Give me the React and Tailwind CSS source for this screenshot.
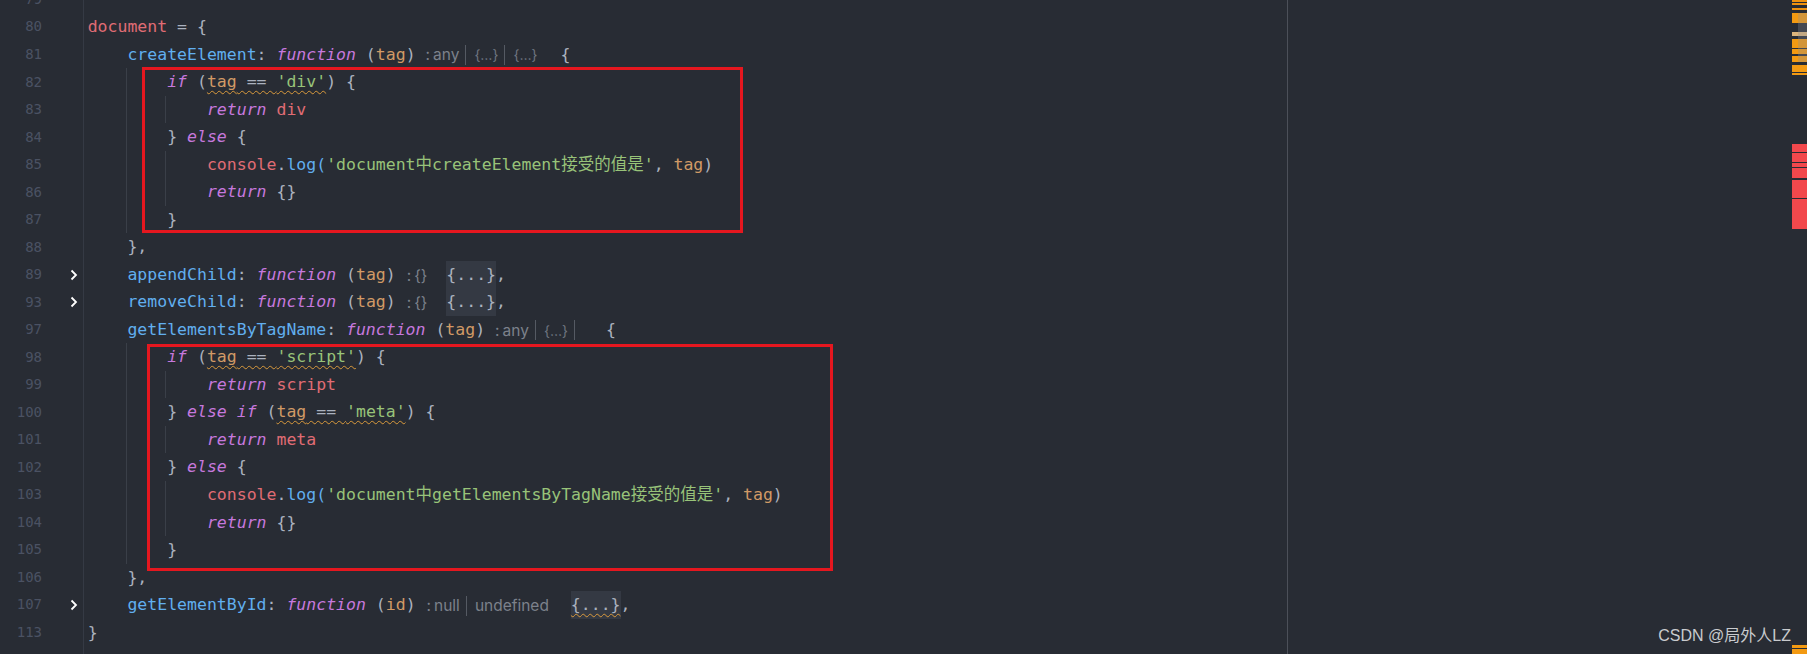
import React from 'react';

const mono = "font-['DejaVu_Sans_Mono','Noto_Sans_CJK_SC',monospace]";

const R = ({ children }) => <span className="text-[#e06c75]">{children}</span>;
const B = ({ children }) => <span className="text-[#61afef]">{children}</span>;
const K = ({ children }) => <span className="text-[#c678dd] italic">{children}</span>;
const G = ({ children }) => <span className="text-[#98c379]">{children}</span>;
const O = ({ children }) => <span className="text-[#d19a66]">{children}</span>;
const P = ({ children }) => <span className="text-[#abb2bf]">{children}</span>;

const Wavy = ({ children }) => (
  <span className="underline decoration-wavy decoration-[#d99a3c] decoration-1 underline-offset-[3px]">
    {children}
  </span>
);

const Sep = () => <span className="ml-[6px] mr-[8px] inline-block h-[20px] w-px bg-[#555a63]" />;

const Hint = ({ className, children }) => (
  <span
    className={
      "inline-flex items-center font-['Inter',sans-serif] text-[15.5px] not-italic text-[#7c818b] align-middle " +
      className
    }
  >
    {children}
  </span>
);

const Dots = () => <span className="text-[14px] text-[#6f7580]">{'{…}'}</span>;

const Folded = ({ children }) => (
  <span className="inline-block bg-[#343943] leading-[27.53px] text-[#abb2bf]">{children}</span>
);

const Chevron = () => (
  <svg width="8" height="12" viewBox="0 0 8 12" className="text-white">
    <path d="M1.5 1.5 L6 6 L1.5 10.5" fill="none" stroke="currentColor" strokeWidth="1.8" />
  </svg>
);

const rows = [
  { n: 79 },
  {
    n: 80,
    code: (
      <>
        <R>document</R>
        <P> = {'{'}</P>
      </>
    ),
  },
  {
    n: 81,
    code: (
      <>
        {'    '}
        <B>createElement</B>
        <P>: </P>
        <K>function</K>
        <P> (</P>
        <O>tag</O>
        <P>)</P>
        <Hint className="ml-[10px] mr-[13px]">
          <span>:</span>
          <span className="ml-[3px]">any</span>
          <Sep />
          <Dots />
          <Sep />
          <Dots />
        </Hint>
        <P> {'{'}</P>
      </>
    ),
  },
  {
    n: 82,
    g: [1],
    code: (
      <>
        {'        '}
        <K>if</K>
        <P> (</P>
        <Wavy>
          <O>tag</O>
          <P> == </P>
          <G>'div'</G>
        </Wavy>
        <P>) {'{'}</P>
      </>
    ),
  },
  {
    n: 83,
    g: [1, 2],
    code: (
      <>
        {'            '}
        <K>return</K> <R>div</R>
      </>
    ),
  },
  {
    n: 84,
    g: [1],
    code: (
      <>
        {'        '}
        <P>{'}'} </P>
        <K>else</K>
        <P> {'{'}</P>
      </>
    ),
  },
  {
    n: 85,
    g: [1, 2],
    code: (
      <>
        {'            '}
        <R>console</R>
        <P>.</P>
        <B>log(</B>
        <G>'document中createElement接受的值是'</G>
        <P>, </P>
        <O>tag</O>
        <P>)</P>
      </>
    ),
  },
  {
    n: 86,
    g: [1, 2],
    code: (
      <>
        {'            '}
        <K>return</K> <P>{'{}'}</P>
      </>
    ),
  },
  {
    n: 87,
    g: [1],
    code: (
      <>
        {'        '}
        <P>{'}'}</P>
      </>
    ),
  },
  {
    n: 88,
    code: (
      <>
        {'    '}
        <P>{'},'}</P>
      </>
    ),
  },
  {
    n: 89,
    fold: true,
    code: (
      <>
        {'    '}
        <B>appendChild</B>
        <P>: </P>
        <K>function</K>
        <P> (</P>
        <O>tag</O>
        <P>)</P>
        <Hint className="ml-[11px] mr-[9px]">
          <span>:</span>
          <span className="ml-[3px]">{'{}'}</span>
        </Hint>{' '}
        <Folded>{'{...}'}</Folded>
        <P>,</P>
      </>
    ),
  },
  {
    n: 93,
    fold: true,
    code: (
      <>
        {'    '}
        <B>removeChild</B>
        <P>: </P>
        <K>function</K>
        <P> (</P>
        <O>tag</O>
        <P>)</P>
        <Hint className="ml-[11px] mr-[9px]">
          <span>:</span>
          <span className="ml-[3px]">{'{}'}</span>
        </Hint>{' '}
        <Folded>{'{...}'}</Folded>
        <P>,</P>
      </>
    ),
  },
  {
    n: 97,
    code: (
      <>
        {'    '}
        <B>getElementsByTagName</B>
        <P>: </P>
        <K>function</K>
        <P> (</P>
        <O>tag</O>
        <P>)</P>
        <Hint className="ml-[10px] mr-[13px]">
          <span>:</span>
          <span className="ml-[3px]">any</span>
          <Sep />
          <Dots />
          <Sep />
        </Hint>
        <P> {'{'}</P>
      </>
    ),
  },
  {
    n: 98,
    g: [1],
    code: (
      <>
        {'        '}
        <K>if</K>
        <P> (</P>
        <Wavy>
          <O>tag</O>
          <P> == </P>
          <G>'script'</G>
        </Wavy>
        <P>) {'{'}</P>
      </>
    ),
  },
  {
    n: 99,
    g: [1, 2],
    code: (
      <>
        {'            '}
        <K>return</K> <R>script</R>
      </>
    ),
  },
  {
    n: 100,
    g: [1],
    code: (
      <>
        {'        '}
        <P>{'}'} </P>
        <K>else if</K>
        <P> (</P>
        <Wavy>
          <O>tag</O>
          <P> == </P>
          <G>'meta'</G>
        </Wavy>
        <P>) {'{'}</P>
      </>
    ),
  },
  {
    n: 101,
    g: [1, 2],
    code: (
      <>
        {'            '}
        <K>return</K> <R>meta</R>
      </>
    ),
  },
  {
    n: 102,
    g: [1],
    code: (
      <>
        {'        '}
        <P>{'}'} </P>
        <K>else</K>
        <P> {'{'}</P>
      </>
    ),
  },
  {
    n: 103,
    g: [1, 2],
    code: (
      <>
        {'            '}
        <R>console</R>
        <P>.</P>
        <B>log(</B>
        <G>'document中getElementsByTagName接受的值是'</G>
        <P>, </P>
        <O>tag</O>
        <P>)</P>
      </>
    ),
  },
  {
    n: 104,
    g: [1, 2],
    code: (
      <>
        {'            '}
        <K>return</K> <P>{'{}'}</P>
      </>
    ),
  },
  {
    n: 105,
    g: [1],
    code: (
      <>
        {'        '}
        <P>{'}'}</P>
      </>
    ),
  },
  {
    n: 106,
    code: (
      <>
        {'    '}
        <P>{'},'}</P>
      </>
    ),
  },
  {
    n: 107,
    fold: true,
    code: (
      <>
        {'    '}
        <B>getElementById</B>
        <P>: </P>
        <K>function</K>
        <P> (</P>
        <O>id</O>
        <P>)</P>
        <Hint className="ml-[11px] mr-[12px]">
          <span>:</span>
          <span className="ml-[3px]">null</span>
          <Sep />
          <span>undefined</span>
        </Hint>{' '}
        <Folded>
          <Wavy>{'{...}'}</Wavy>
        </Folded>
        <P>,</P>
      </>
    ),
  },
  {
    n: 113,
    code: <P>{'}'}</P>,
  },
  { n: 114 },
];

const marks = [
  ['top-[0px] h-[1.5px]', 'bg-[#f0920f]'],
  ['top-[3px] h-[1.5px]', 'bg-[#f0920f]'],
  ['top-[7.5px] h-[2.5px]', 'bg-[#f0920f]'],
  ['top-[13px] h-[10px]', 'bg-[#f39a12]'],
  ['top-[32px] h-[4px]', 'bg-[#dcb57c]'],
  ['top-[39px] h-[9px]', 'bg-[#f39a12]'],
  ['top-[49px] h-[5px]', 'bg-[#f39a12]'],
  ['top-[56px] h-[6px]', 'bg-[#f39a12]'],
  ['top-[65px] h-[7px]', 'bg-[#f39a12]'],
  ['top-[72.5px] h-[2.5px]', 'bg-[#f39a12]'],
  ['top-[144px] h-[8px]', 'bg-[#f2484c]'],
  ['top-[153px] h-[9px]', 'bg-[#f2484c]'],
  ['top-[163px] h-[4px]', 'bg-[#f2484c]'],
  ['top-[168px] h-[10px]', 'bg-[#f2484c]'],
  ['top-[180px] h-[18px]', 'bg-[#f2484c]'],
  ['top-[199px] h-[30px]', 'bg-[#f2484c]'],
  ['top-[645px] h-[2.5px]', 'bg-[#f39a12]'],
  ['top-[648.5px] h-[6px]', 'bg-[#f39a12]'],
];

export default function App() {
  return (
    <div className="relative flex h-[654px] w-[1807px] overflow-hidden bg-[#282c34]">
      <div className={'mt-[-14.3px] flex flex-col ' + mono}>
        {rows.map(row => (
          <div key={row.n} className="flex h-[27.53px] shrink-0">
            <div className="flex w-[84px] items-center border-r border-[#353a44]">
              <span className="w-[42px] text-right text-[14px] text-[#4b5263]">{row.n}</span>
              <span className="flex w-[41px] pl-[28px]">{row.fold && <Chevron />}</span>
            </div>
            <div className="relative w-[1204px] border-r border-[#4c5059] pl-[3.7px] text-[16.5px] leading-[27.53px] whitespace-pre">
              {row.g && row.g.includes(1) && (
                <span className="absolute top-0 bottom-0 left-[41.5px] w-px bg-[#3a3f48]" />
              )}
              {row.g && row.g.includes(2) && (
                <span className="absolute top-0 bottom-0 left-[81.3px] w-px bg-[#3a3f48]" />
              )}
              {row.code}
            </div>
          </div>
        ))}
      </div>

      <div className="flex-1" />

      <div className="relative w-[15px]">
        {marks.map(([pos, color], i) => (
          <div key={i} className={'absolute left-0 right-0 ' + pos + ' ' + color} />
        ))}
        <div className="absolute top-[13px] right-0 h-[49px] w-[9px] bg-[#8a8f98]/30" />
      </div>

      <div className="pointer-events-none absolute left-[142px] top-[67px] h-[166px] w-[601px] border-[3px] border-[#e5171f]" />
      <div className="pointer-events-none absolute left-[147px] top-[344px] h-[227px] w-[686px] border-[3px] border-[#e5171f]" />

      <div className="absolute right-[16px] top-[624px] font-['Liberation_Sans','Noto_Sans_CJK_SC',sans-serif] text-[16px] text-[#c9cbce]">
        CSDN @局外人LZ
      </div>
    </div>
  );
}
